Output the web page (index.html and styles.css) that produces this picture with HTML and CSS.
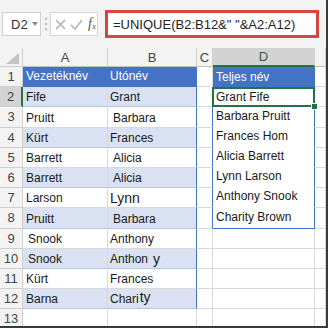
FILE: index.html
```html
<!DOCTYPE html>
<html lang="hu">
	<head>
		<meta charset="UTF-8" />
		<title>UNIQUE – Teljes név</title>
		<link rel="stylesheet" href="styles.css">
	</head>
	<body>
		<div class="app">
			<!-- szerkesztőléc -->
			<div class="formula-bar">
				<div class="name-box">D2<span class="caret"></span></div>
				<div class="dots"><i></i><i></i><i></i></div>
				<div class="fx-box">
					<svg width="11" height="11" viewBox="0 0 11 11"><path d="M1 1 L10 10 M10 1 L1 10" stroke="#b4b4b4" stroke-width="1.6" fill="none"/></svg>
					<svg width="13" height="11" viewBox="0 0 13 11"><path d="M1 6 L5 10 L12 1" stroke="#b4b4b4" stroke-width="1.6" fill="none"/></svg>
					<span class="fx">f<sub>x</sub></span>
				</div>
				<div class="formula">=UNIQUE(B2:B12&amp;" "&amp;A2:A12)</div>
			</div>

			<!-- munkalap -->
			<div class="sheet">
				<div class="corner"></div>
				<div class="hd">A</div>
				<div class="hd">B</div>
				<div class="hd">C</div>
				<div class="hd active">D</div>
				<div class="hd"></div>

				<div class="rh">1</div>
				<div class="c head">Vezetéknév</div>
				<div class="c head last">Utónév</div>
				<div class="c"></div>
				<div class="c head spill-top">Teljes név</div>
				<div class="c"></div>

				<div class="rh active">2</div>
				<div class="c band">Fife</div>
				<div class="c band last">Grant</div>
				<div class="c edge"></div>
				<div class="c spill sel">Grant Fife</div>
				<div class="c"></div>

				<div class="rh">3</div>
				<div class="c">Pruitt</div>
				<div class="c last nudge">Barbara</div>
				<div class="c edge"></div>
				<div class="c spill">Barbara Pruitt</div>
				<div class="c"></div>

				<div class="rh">4</div>
				<div class="c band">Kürt</div>
				<div class="c band last">Frances</div>
				<div class="c edge"></div>
				<div class="c spill">Frances Hom</div>
				<div class="c"></div>

				<div class="rh">5</div>
				<div class="c">Barrett</div>
				<div class="c last nudge">Alicia</div>
				<div class="c edge"></div>
				<div class="c spill">Alicia Barrett</div>
				<div class="c"></div>

				<div class="rh">6</div>
				<div class="c band">Barrett</div>
				<div class="c band last nudge">Alicia</div>
				<div class="c edge"></div>
				<div class="c spill">Lynn Larson</div>
				<div class="c"></div>

				<div class="rh">7</div>
				<div class="c">Larson</div>
				<div class="c last big">Lynn</div>
				<div class="c edge"></div>
				<div class="c spill">Anthony Snook</div>
				<div class="c"></div>

				<div class="rh">8</div>
				<div class="c band">Pruitt</div>
				<div class="c band last nudge">Barbara</div>
				<div class="c edge"></div>
				<div class="c spill spill-end">Charity Brown</div>
				<div class="c"></div>

				<div class="rh">9</div>
				<div class="c nudge">Snook</div>
				<div class="c last">Anthony</div>
				<div class="c"></div>
				<div class="c"></div>
				<div class="c"></div>

				<div class="rh">10</div>
				<div class="c band nudge">Snook</div>
				<div class="c band last">Anthon<span class="gap">y</span></div>
				<div class="c"></div>
				<div class="c"></div>
				<div class="c"></div>

				<div class="rh">11</div>
				<div class="c">Kürt</div>
				<div class="c last">Frances</div>
				<div class="c"></div>
				<div class="c"></div>
				<div class="c"></div>

				<div class="rh">12</div>
				<div class="c band">Barna</div>
				<div class="c band last">Chari<span class="gap small">ty</span></div>
				<div class="c"></div>
				<div class="c"></div>
				<div class="c"></div>

				<div class="rh">13</div>
				<div class="c"></div>
				<div class="c"></div>
				<div class="c"></div>
				<div class="c"></div>
				<div class="c"></div>
			</div>
		</div>
	</body>
</html>
```

FILE: styles.css
```css
body {
	margin: 0;
	font-family: "Liberation Sans", Arial, sans-serif;
	color: #1a1a1a;
}
.app {
	width: 328px;
	height: 328px;
	box-sizing: border-box;
	background: #f3f3f3;
	border-right: 2px solid #3a3a3a;
	border-bottom: 2px solid #3a3a3a;
	overflow: hidden;
}

/* szerkesztőléc */
.formula-bar {
	height: 48px;
	display: flex;
	align-items: center;
	padding-left: 2px;
}
.name-box {
	width: 39px;
	height: 24px;
	box-sizing: border-box;
	background: #fff;
	border: 1px solid #cfcfcf;
	display: flex;
	align-items: center;
	padding-left: 8px;
	font-size: 13px;
	color: #333;
}
.caret {
	margin-left: 4px;
	border-left: 3px solid transparent;
	border-right: 3px solid transparent;
	border-top: 4px solid #8a8a8a;
}
.dots {
	width: 9px;
	display: flex;
	flex-direction: column;
	align-items: center;
	gap: 3px;
}
.dots i {
	width: 2px;
	height: 2px;
	background: #b8b8b8;
}
.fx-box {
	width: 48px;
	height: 24px;
	box-sizing: border-box;
	background: #fff;
	border: 1px solid #d6d6d6;
	display: flex;
	align-items: center;
	gap: 4px;
	padding-left: 4px;
}
.fx {
	font-family: "Liberation Serif", serif;
	font-style: italic;
	font-size: 14px;
	color: #555;
	margin-left: 1px;
}
.fx sub {
	font-size: 9px;
	vertical-align: -1px;
}
.formula {
	margin-left: 7px;
	width: 214px;
	height: 28px;
	box-sizing: border-box;
	background: #fff;
	border: 3px solid #d8473f;
	display: flex;
	align-items: center;
	padding-left: 5px;
	font-size: 13px;
	color: #222;
}

/* munkalap */
.sheet {
	display: grid;
	grid-template-columns: 23px 85px 89px 16px 102px 1fr;
	grid-template-rows: 19px repeat(12, 20.2px) 1fr;
	height: 280px;
	background: #fff;
}
.corner {
	background: #f3f3f3;
	border-right: 1px solid #cfcfcf;
	border-bottom: 1px solid #cfcfcf;
	position: relative;
}
.corner::after {
	content: "";
	position: absolute;
	right: 3px;
	bottom: 2px;
	width: 13px;
	height: 11px;
	background: #c4c4c4;
	clip-path: polygon(100% 0, 100% 100%, 0 100%);
}
.hd {
	background: #f3f3f3;
	border-right: 1px solid #cfcfcf;
	border-bottom: 1px solid #c0c0c0;
	display: flex;
	align-items: center;
	justify-content: center;
	font-size: 13px;
	color: #444;
}
.hd.active {
	background: #d3d3d3;
	border-bottom: 2px solid #217346;
	color: #3d5a47;
}
.rh {
	background: #f3f3f3;
	border-right: 1px solid #cfcfcf;
	border-bottom: 1px solid #cfcfcf;
	display: flex;
	align-items: center;
	justify-content: center;
	font-size: 13px;
	color: #444;
}
.rh.active {
	background: #d3d3d3;
	border-right: 2px solid #217346;
}
.c {
	box-sizing: border-box;
	border-right: 1px solid #d9d9d9;
	border-bottom: 1px solid #d9d9d9;
	display: flex;
	align-items: flex-end;
	padding: 0 0 2px 3px;
	font-size: 12px;
	line-height: 14px;
	white-space: nowrap;
}

/* táblázat */
.c.head {
	background: #4472c4;
	color: #fff;
	border-bottom-color: #4472c4;
	border-right-color: #4472c4;
	padding-bottom: 3px;
}
.c.band {
	background: #d9e1f2;
	border-bottom-color: #b4c6e7;
}
.c.last {
	border-right-color: #4472c4;
	padding-left: 2px;
}
.c.nudge {
	padding-left: 5px;
}
.c.big {
	font-size: 14px;
}
.gap {
	margin-left: 5px;
	font-size: 14px;
}
.gap.small {
	margin-left: 1px;
	position: relative;
	top: -2px;
}

/* kiömlött tartomány */
.c.edge {
	border-right-color: #4472c4;
}
.c.spill {
	border-bottom-color: #fff;
	padding-bottom: 4px;
	border-right-color: #4472c4;
}
.c.spill-top {
	padding-bottom: 2px;
}
.c.spill-end {
	border-bottom-color: #4472c4;
}
.c.sel {
	position: relative;
	padding-bottom: 2px;
}
.c.sel::before {
	content: "";
	position: absolute;
	left: -1px;
	top: 0;
	right: -1px;
	bottom: -1px;
	border: 2px solid #217346;
}
.c.sel::after {
	content: "";
	position: absolute;
	right: -4px;
	bottom: -4px;
	width: 5px;
	height: 5px;
	background: #217346;
	border: 1px solid #fff;
}
```
